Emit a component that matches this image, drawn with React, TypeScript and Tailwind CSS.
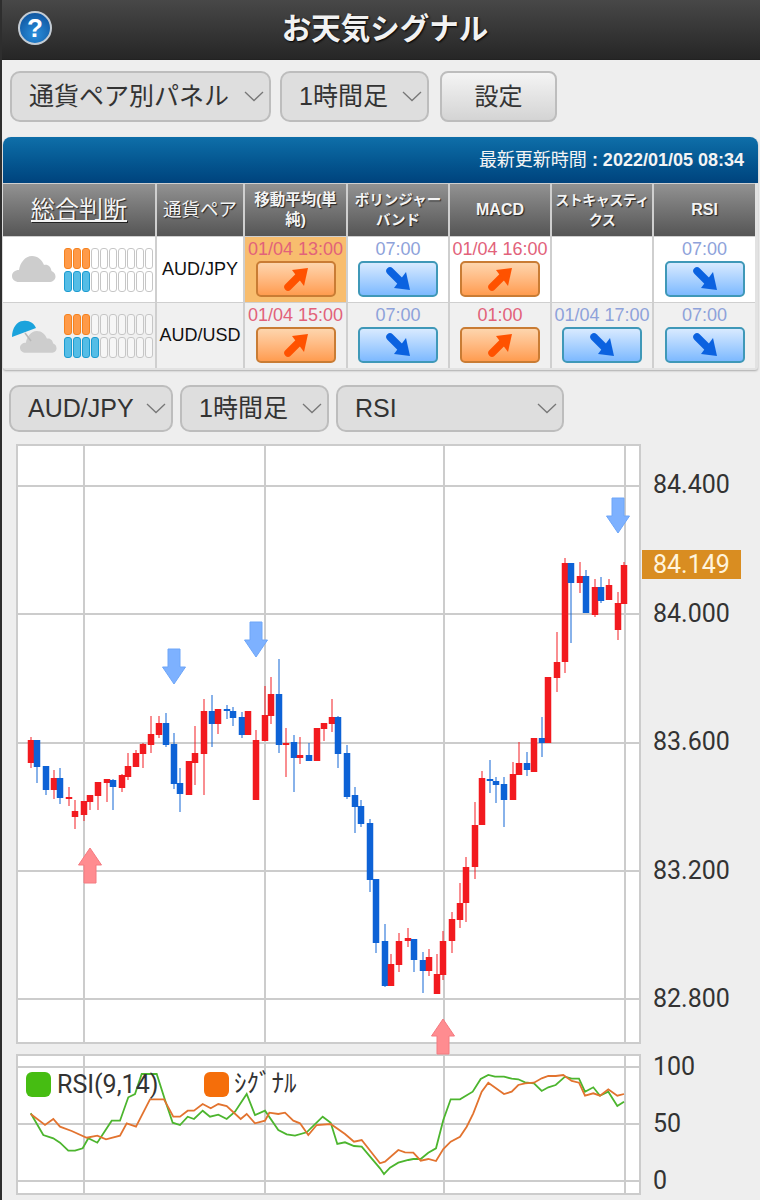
const jp = "font-['Liberation_Sans','Noto_Sans_CJK_JP',sans-serif]";

// color, x, body top, body bottom, wick top, wick bottom (page coordinates)
const candles: [string, number, number, number, number, number][] = [
  ['r', 31, 740, 763, 737, 768], ['b', 37, 740, 767, 740, 783], ['b', 46, 766, 790, 766, 795],
  ['r', 54, 778, 790, 770, 799], ['b', 60, 778, 798, 768, 804], ['r', 69, 797, 799, 787, 806],
  ['r', 75, 811, 817, 800, 829], ['r', 84, 801, 815, 801, 821], ['r', 90, 795, 802, 795, 810],
  ['r', 98, 782, 796, 782, 810], ['r', 107, 779, 783, 779, 802], ['b', 113, 780, 787, 779, 810],
  ['r', 122, 775, 788, 774, 792], ['r', 128, 766, 777, 753, 780], ['r', 136, 753, 767, 750, 767],
  ['r', 143, 744, 754, 743, 768], ['r', 151, 734, 745, 716, 753], ['r', 159, 723, 735, 716, 738],
  ['b', 166, 723, 745, 713, 747], ['b', 174, 744, 784, 733, 789], ['b', 180, 783, 794, 768, 812],
  ['r', 189, 761, 795, 761, 795], ['r', 195, 753, 763, 726, 785], ['r', 204, 711, 754, 699, 795],
  ['b', 212, 711, 724, 695, 747], ['r', 218, 709, 724, 709, 734], ['b', 227, 709, 711, 705, 719],
  ['b', 233, 711, 718, 707, 726], ['b', 242, 717, 735, 712, 738], ['r', 248, 711, 735, 711, 735],
  ['r', 256, 740, 800, 730, 800], ['r', 265, 715, 741, 686, 741], ['r', 271, 694, 716, 677, 724],
  ['b', 279, 694, 745, 659, 753], ['r', 286, 743, 745, 728, 777], ['b', 294, 742, 758, 735, 792],
  ['r', 300, 755, 758, 737, 764], ['b', 309, 755, 761, 743, 761], ['r', 317, 728, 761, 728, 761],
  ['r', 324, 723, 729, 723, 741], ['r', 332, 717, 724, 699, 732], ['b', 338, 717, 754, 716, 768],
  ['b', 347, 753, 797, 745, 799], ['b', 355, 795, 807, 787, 833], ['b', 361, 806, 824, 800, 827],
  ['b', 370, 823, 880, 819, 892], ['b', 376, 879, 943, 879, 953], ['b', 385, 941, 986, 924, 987],
  ['r', 391, 964, 986, 954, 986], ['r', 399, 941, 965, 933, 972], ['r', 408, 938, 941, 928, 947],
  ['b', 414, 939, 960, 939, 972], ['b', 423, 960, 971, 952, 993], ['r', 429, 957, 971, 949, 976],
  ['r', 437, 974, 994, 954, 994], ['r', 443, 941, 975, 931, 980], ['r', 452, 919, 941, 912, 953],
  ['r', 460, 903, 920, 883, 928], ['r', 466, 867, 903, 857, 922], ['r', 475, 825, 867, 802, 879],
  ['r', 482, 778, 825, 771, 825], ['b', 490, 779, 781, 760, 793], ['b', 496, 781, 785, 777, 803],
  ['b', 504, 784, 800, 777, 827], ['r', 513, 774, 800, 762, 800], ['r', 519, 763, 775, 742, 775],
  ['b', 527, 763, 770, 752, 776], ['r', 534, 738, 772, 738, 772], ['b', 542, 738, 743, 717, 757],
  ['r', 548, 677, 743, 677, 743], ['r', 557, 662, 678, 632, 692], ['r', 565, 563, 662, 558, 673],
  ['b', 571, 563, 583, 563, 643], ['r', 580, 576, 583, 562, 593], ['b', 586, 576, 613, 570, 613],
  ['r', 595, 587, 615, 579, 617], ['b', 601, 587, 601, 577, 603], ['r', 609, 585, 600, 579, 600],
  ['r', 618, 603, 630, 592, 640], ['r', 624, 565, 604, 562, 604],
];

// traced from the reference at 3x, first half starts at x=0 and second half at x=380
const greenA = [[92,340],[130,405],[160,415],[180,428],[205,452],[225,452],[248,445],[265,415],[292,428],[335,362],[360,362],[385,292],[405,282],[425,222],[470,222],[495,300],[518,368],[540,375],[563,350],[582,357],[608,332],[630,350],[655,344],[680,357],[705,335],[740,282],[765,345],[795,332],[835,390],[860,403],[885,407],[920,397],[968,350],[992,368],[1012,432],[1035,427],[1062,438],[1085,440],[1140,505]];
const greenB = [[12,522],[30,503],[55,488],[85,480],[100,477],[122,477],[145,458],[168,445],[190,360],[212,298],[240,298],[278,275],[302,237],[325,225],[345,230],[372,230],[395,236],[415,238],[435,247],[462,250],[485,273],[505,262],[527,255],[555,230],[575,236],[597,236],[615,275],[640,262],[660,287],[685,275],[712,318],[732,305]];
const orangeA = [[92,342],[135,375],[160,357],[180,380],[215,393],[260,413],[292,407],[318,418],[360,407],[380,370],[408,380],[450,298],[492,298],[520,350],[540,350],[563,332],[582,332],[608,312],[632,325],[655,312],[680,318],[722,357],[740,342],[765,370],[795,362],[808,338],[835,342],[855,338],[880,362],[900,370],[925,405],[950,375],[992,372],[1035,402],[1062,425],[1085,420],[1140,490]];
const orangeB = [[15,485],[55,450],[75,457],[100,458],[122,482],[145,477],[168,483],[190,447],[212,425],[240,410],[260,380],[280,340],[305,275],[325,248],[372,282],[395,275],[415,255],[435,250],[462,248],[485,235],[505,228],[527,228],[550,225],[575,243],[597,248],[615,287],[640,280],[660,287],[685,268],[712,287],[732,282]];

const toPoints = (a: number[][], b: number[][]) =>
  [...a.map(([x, y]) => [x / 3, 1000 + y / 3]), ...b.map(([x, y]) => [380 + x / 3, 1000 + y / 3])]
    .map(([x, y]) => `${x.toFixed(1)},${y.toFixed(1)}`)
    .join(' ');

const Chevron = () => (
  <svg width="20" height="11" viewBox="0 0 20 11" className="shrink-0">
    <polyline points="1,1 10,9.500 19,1" fill="none" stroke="#777" strokeWidth="1.300" />
  </svg>
);

const Pick = ({ label, className }: { label: string; className: string }) => (
  <div className={`flex items-center justify-between rounded-[10px] border-2 border-[#bdbdbd] bg-[#dedede] pl-[17px] pr-[5px] text-[#333] ${className}`}>
    <span className="whitespace-nowrap">{label}</span>
    <Chevron />
  </div>
);

const Gauge = ({ on, tone }: { on: number; tone: 'o' | 'b' }) => (
  <div className="flex gap-[1px]">
    {Array.from({ length: 10 }, (_, i) => (
      <span
        key={i}
        className={`h-[21px] w-[8px] rounded-[3px] border-[1.5px] ${
          i >= on
            ? 'border-[#c6c6c6] bg-white/40'
            : tone === 'o'
              ? 'border-[#f5821f] bg-[#ff9a48]'
              : 'border-[#1b9bd0] bg-[#55bde6]'
        }`}
      />
    ))}
  </div>
);

const cloudPath = 'M7 26C3 26 0 23.500 0 20C0 16.500 3 14 7 14C8 7 13 0 20 0C26 0 30 4 32 9C36 8 39 11 39.500 15C42 16 43.500 18 43.500 20.500C43.500 24 40.500 26 37 26Z';

const Weather = ({ rain }: { rain?: boolean }) => (
  <svg width="48" height="38" viewBox="0 0 48 38" className="shrink-0">
    {rain ? (
      <>
        <path d={cloudPath} fill="#cdcdcd" transform="translate(8 14) scale(.84)" />
        <line x1="13" y1="16" x2="19" y2="24" stroke="#b8b8b8" strokeWidth="1.500" />
        <path d="M0 20C0 11 5 4 11 4C17 3 22 6 24 11Z" fill="#1ba3dc" />
      </>
    ) : (
      <path d={cloudPath} fill="#cdcdcd" transform="translate(0 5)" />
    )}
  </svg>
);

const Hit = ({ up }: { up: boolean }) => (
  <div
    className={`flex h-[36px] w-[80px] items-center justify-center rounded-[5px] border-2 ${
      up
        ? 'border-[#c97c34] bg-gradient-to-b from-[#fdd5ad] to-[#ff9c4f]'
        : 'border-[#3f98b8] bg-gradient-to-b from-[#d8eaff] to-[#7db9ff]'
    }`}
  >
    <svg width="24" height="24" viewBox="0 0 24 24">
      {up ? (
        <>
          <line x1="4" y1="20" x2="14" y2="10" stroke="#ff5200" strokeWidth="7.500" strokeLinecap="round" />
          <polygon points="8,3 24,1 20,19" fill="#ff5200" />
        </>
      ) : (
        <>
          <line x1="4" y1="4" x2="14" y2="14" stroke="#0b62e0" strokeWidth="7.500" strokeLinecap="round" />
          <polygon points="8,21 24,23 20,5" fill="#0b62e0" />
        </>
      )}
    </svg>
  </div>
);

const Signal = ({ time, up, hot, bg }: { time?: string; up?: boolean; hot?: boolean; bg: string }) => (
  <div className={`flex flex-col items-center ${hot ? 'bg-[#f8bd6e]' : bg}`}>
    {time && (
      <>
        <div className={`h-[24px] whitespace-nowrap text-[18px] leading-[25px] ${up ? 'text-[#e2627a]' : 'text-[#8ea2da]'}`}>{time}</div>
        <Hit up={!!up} />
      </>
    )}
  </div>
);

const HeadCell = ({ children, className = '' }: { children: React.ReactNode; className?: string }) => (
  <div className={`flex flex-col items-center justify-center whitespace-nowrap bg-gradient-to-b from-[#929292] to-[#565656] text-[#f4f4f4] [text-shadow:1px_1px_1px_#222] ${className}`}>
    {children}
  </div>
);

const Row = ({ pair, rain, on, bg, cells }: { pair: string; rain?: boolean; on: number; bg: string; cells: { time?: string; up?: boolean; hot?: boolean }[] }) => (
  <>
    <div className={`flex items-center pl-[9px] ${bg}`}>
      <Weather rain={rain} />
      <div className="ml-[4px] flex flex-col gap-[2px]">
        <Gauge on={3} tone="o" />
        <Gauge on={on} tone="b" />
      </div>
    </div>
    <div className={`flex items-center justify-center whitespace-nowrap text-[18px] text-[#111] ${bg}`}>{pair}</div>
    {cells.map((c, i) => (
      <Signal key={i} bg={bg} {...c} />
    ))}
  </>
);

const Arrow = ({ x, y, down }: { x: number; y: number; down: boolean }) => {
  const d = down ? 1 : -1;
  const p = [[-6, 0], [6, 0], [6, 18], [11.500, 18], [0, 35], [-11.500, 18], [-6, 18]]
    .map(([a, b]) => `${x + a},${y + d * b}`)
    .join(' ');
  return <polygon points={p} fill={down ? '#7db1ff' : '#ff8c90'} stroke={down ? '#6ea6f8' : '#f47a80'} strokeWidth="1" />;
};

const Chart = () => (
  <svg width="758" height="760" viewBox="2 440 758 760" className="block">
    <rect x="17" y="445" width="623" height="598" fill="#fff" stroke="#cccccc" strokeWidth="2" />
    <rect x="17" y="1055" width="623" height="139" fill="#fff" stroke="#cccccc" strokeWidth="2" />
    <g stroke="#cccccc" strokeWidth="2">
      {[486, 614, 743, 871, 999, 1067, 1124, 1181].map(y => (
        <line key={y} x1="17" x2="640" y1={y} y2={y} />
      ))}
      {[84, 265, 444, 625].map(x => (
        <g key={x}>
          <line x1={x} x2={x} y1="445" y2="1043" />
          <line x1={x} x2={x} y1="1055" y2="1194" />
        </g>
      ))}
    </g>
    {candles.map(([c, x, t, b, wt, wb]) => (
      <g key={x} fill={c === 'r' ? '#f21a1f' : '#0d62d6'}>
        <rect x={x - 0.75} y={wt} width="1.500" height={wb - wt} opacity="0.65" />
        <rect x={x - 3.250} y={t} width="6.500" height={Math.max(b - t, 2)} />
      </g>
    ))}
    <Arrow x={174} y={649} down />
    <Arrow x={256} y={622} down />
    <Arrow x={618} y={498} down />
    <Arrow x={90} y={883} down={false} />
    <Arrow x={443} y={1054} down={false} />
    <polyline points={toPoints(greenA, greenB)} fill="none" stroke="#4cb52e" strokeWidth="1.800" />
    <polyline points={toPoints(orangeA, orangeB)} fill="none" stroke="#e2732f" strokeWidth="1.800" />
    <rect x="26" y="1072" width="25" height="25" rx="6" fill="#46bd12" />
    <rect x="204" y="1072" width="25" height="25" rx="6" fill="#f56e0a" />
    <g fontFamily="Roboto, 'Noto Sans CJK JP', sans-serif" fontSize="25" fill="#333">
      <text x="57" y="1093">RSI(9,14)</text>
      <text x="234" y="1092">ｼｸﾞﾅﾙ</text>
      {[['84.400', 493], ['84.000', 622], ['83.600', 750], ['83.200', 879], ['82.800', 1007], ['100', 1075], ['50', 1132], ['0', 1189]].map(([t, y]) => (
        <text key={t} x="653" y={y}>{t}</text>
      ))}
    </g>
    <rect x="642" y="550" width="99" height="29" fill="#d98d21" />
    <text x="653" y="573" fontFamily="Roboto, sans-serif" fontSize="25" fill="#fff4dc">84.149</text>
  </svg>
);

export default function App() {
  return (
    <div className={`h-[1200px] w-[760px] overflow-hidden border-l-2 border-[#2e2e2e] bg-[#eeeeee] ${jp}`}>
      <div className="relative flex h-[60px] items-center justify-center border-b border-[#222] bg-gradient-to-b from-[#484848] to-[#262626] pl-[8px]">
        <div className="absolute left-[16px] top-[11px] flex h-[34px] w-[34px] items-center justify-center rounded-full border-2 border-[#c4ccd4] bg-[radial-gradient(circle_at_50%_70%,#2a8fdc,#0a4a94)] text-[26px] font-bold leading-none text-white">?</div>
        <h1 className="text-[29.500px] font-bold text-[#f2f2f2] [text-shadow:1px_1px_2px_#000]">お天気シグナル</h1>
      </div>

      <div className="flex gap-[9px] pl-[8px] pt-[11px] text-[25px]">
        <Pick label="通貨ペア別パネル" className="h-[51px] w-[261px]" />
        <Pick label="1時間足" className="h-[51px] w-[149px]" />
        <div className="ml-[2px] flex h-[51px] w-[117px] items-center justify-center rounded-[8px] border-2 border-[#bdbdbd] bg-gradient-to-b from-[#f4f4f4] to-[#d4d4d4] text-[24px] text-[#333]">設定</div>
      </div>

      <div className="ml-[1px] mt-[15px] h-[233px] w-[755px] rounded-t-[8px] rounded-b-[3px] bg-[#e2e2e2] shadow-[0_1px_2px_#aaa]">
        <div className="flex h-[46px] items-center justify-end rounded-t-[8px] bg-gradient-to-b from-[#0f6fa9] to-[#00437d] pr-[14px] text-[18px] text-[#f4f4f4]">
          最新更新時間<b className="whitespace-pre"> : 2022/01/05 08:34</b>
        </div>
        <div className="grid w-[752px] grid-cols-[152px_86px_101px_100px_100px_100px_101px] grid-rows-[52px_65px_65px] gap-x-[2px] gap-y-[1px] bg-[#cfcfcf] pt-[1px]">
          <HeadCell className="text-[24px] font-normal underline">総合判断</HeadCell>
          <HeadCell className="text-[18.500px]">通貨ペア</HeadCell>
          <HeadCell className="text-[15.500px] font-bold leading-[20px]"><span>移動平均(単</span><span>純)</span></HeadCell>
          <HeadCell className="text-[14.500px] font-bold leading-[20px]"><span>ボリンジャー</span><span>バンド</span></HeadCell>
          <HeadCell className="text-[16px] font-bold">MACD</HeadCell>
          <HeadCell className="text-[14px] font-bold leading-[20px] tracking-[-0.5px]"><span>ストキャスティ</span><span>クス</span></HeadCell>
          <HeadCell className="text-[16px] font-bold">RSI</HeadCell>
          <Row
            pair="AUD/JPY"
            on={3}
            bg="bg-white"
            cells={[
              { time: '01/04 13:00', up: true, hot: true },
              { time: '07:00' },
              { time: '01/04 16:00', up: true },
              {},
              { time: '07:00' },
            ]}
          />
          <Row
            pair="AUD/USD"
            rain
            on={4}
            bg="bg-[#f0f0f0]"
            cells={[
              { time: '01/04 15:00', up: true },
              { time: '07:00' },
              { time: '01:00', up: true },
              { time: '01/04 17:00' },
              { time: '07:00' },
            ]}
          />
        </div>
      </div>

      <div className="flex gap-[7px] pl-[7px] pt-[15px] text-[25px]">
        <Pick label="AUD/JPY" className="h-[47px] w-[164px]" />
        <Pick label="1時間足" className="h-[47px] w-[149px]" />
        <Pick label="RSI" className="h-[47px] w-[228px]" />
      </div>

      <div className="mt-[8px]">
        <Chart />
      </div>
    </div>
  );
}
